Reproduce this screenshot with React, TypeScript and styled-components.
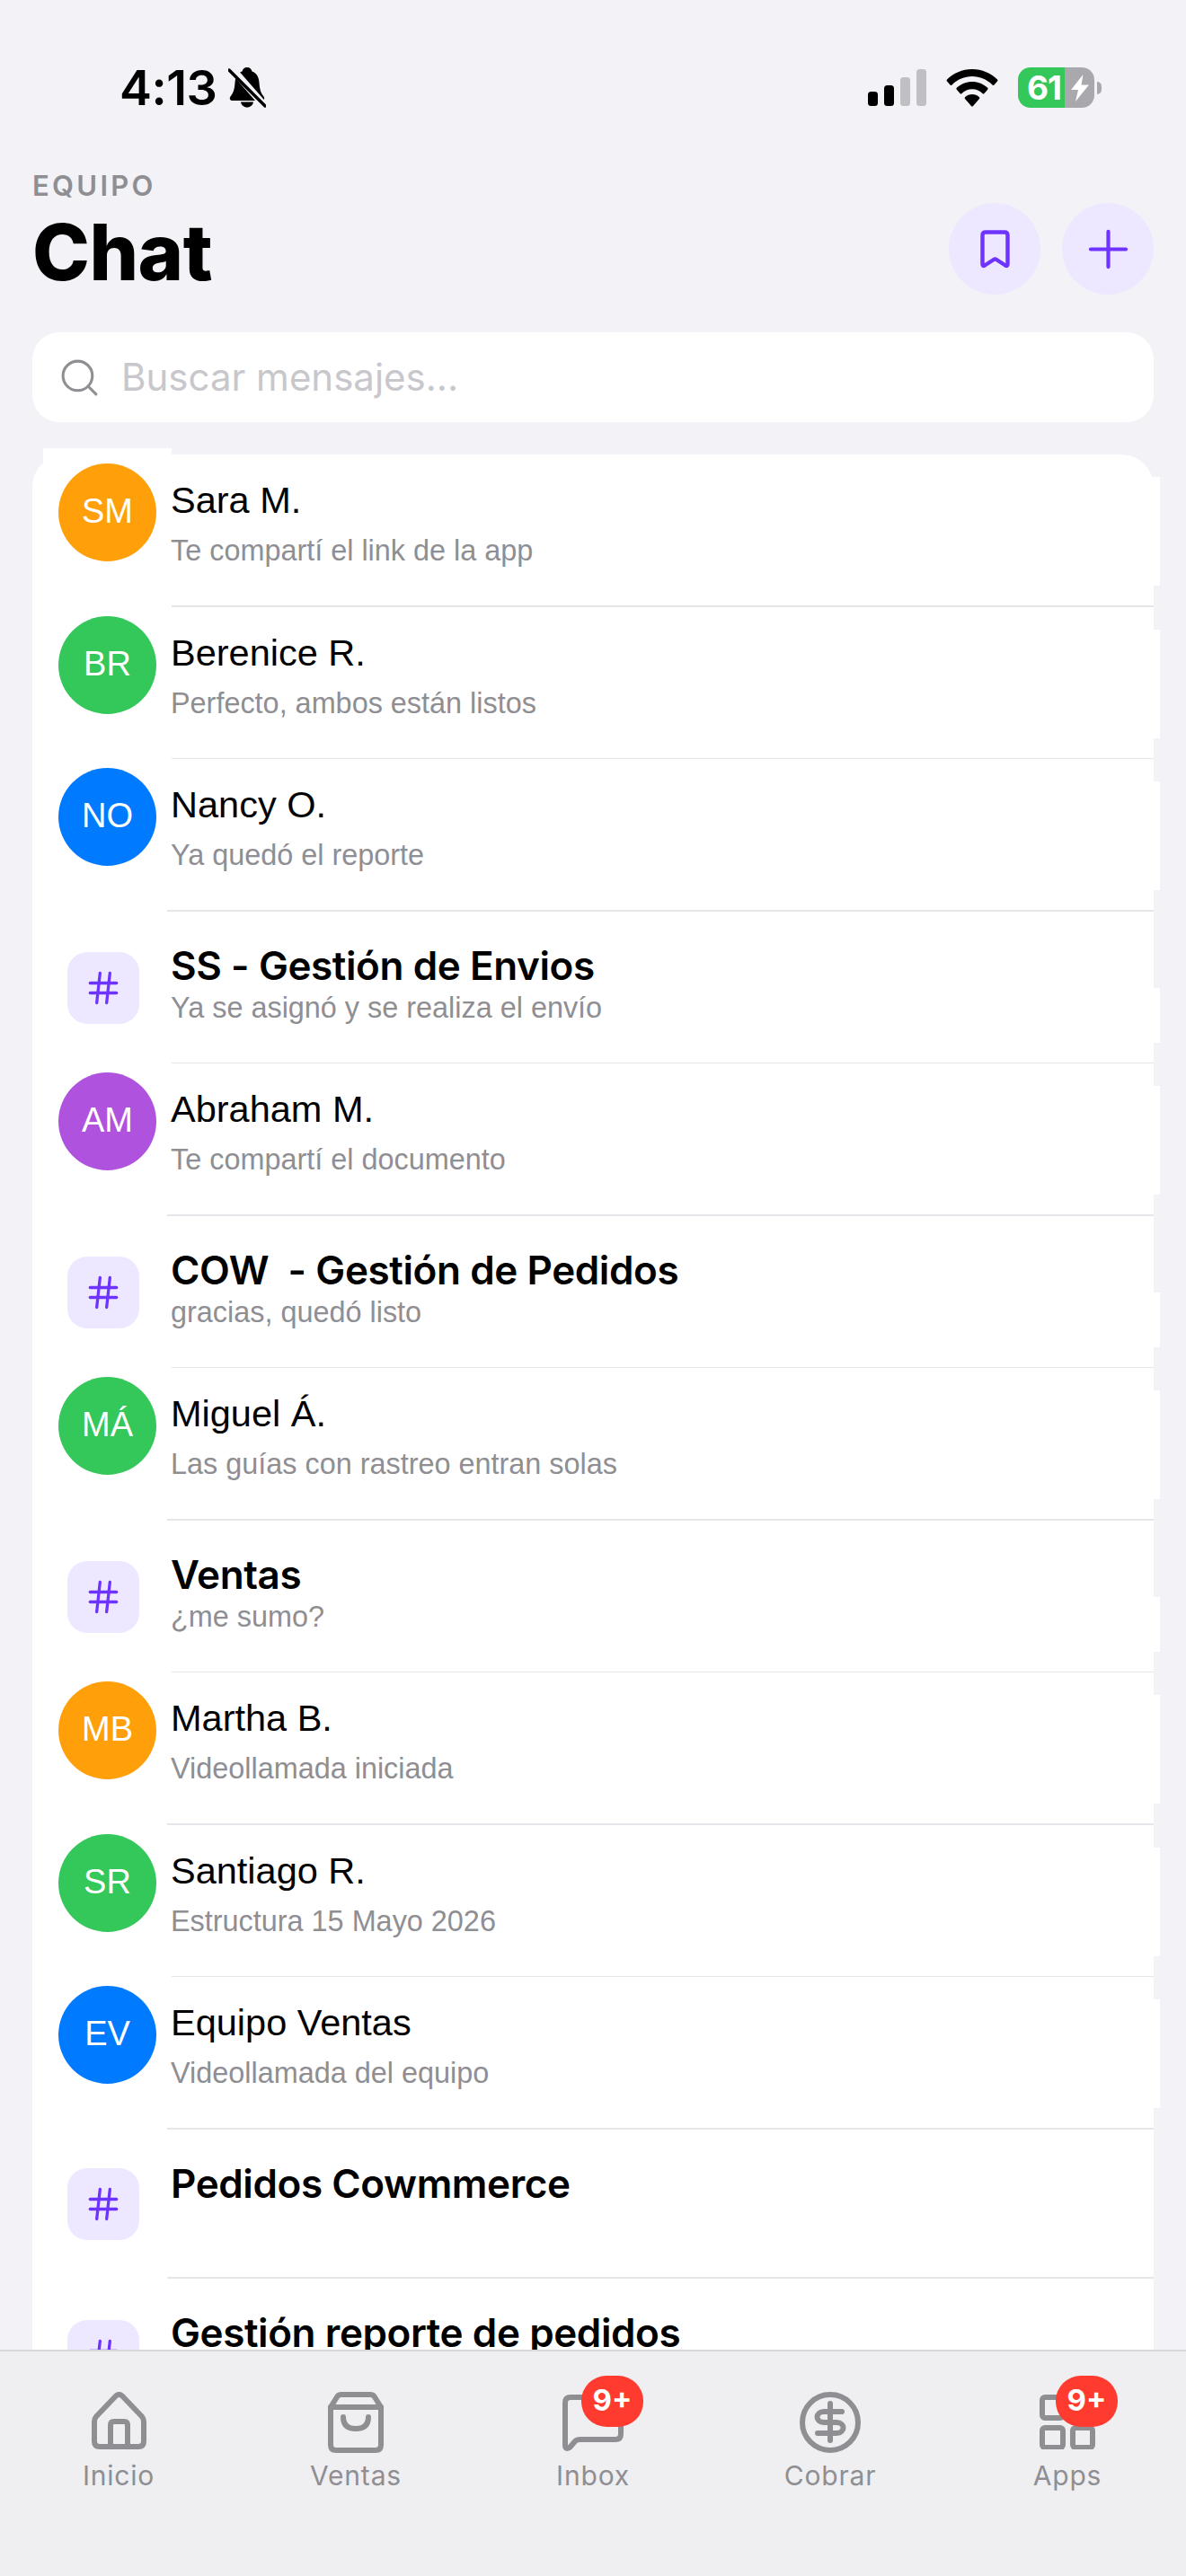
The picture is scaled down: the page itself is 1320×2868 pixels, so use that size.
import React from "react";
import styled, { createGlobalStyle } from "styled-components";
import { Hash, Plus, Search } from "lucide-react";

const GlobalStyle = createGlobalStyle`
  html, body { margin: 0; padding: 0; background: #f2f2f7; }
  * { box-sizing: border-box; }
`;

const SANS = `"Liberation Sans", Arial, sans-serif`;
const INTER = `Inter, "Noto Sans", sans-serif`;
const PURPLE = "#6e33ff";
const GREY = "#8e8e93";

const Screen = styled.div`
  width: 1320px;
  height: 2868px;
  background: #f2f2f7;
  display: flex;
  flex-direction: column;
  overflow: hidden;
  font-family: ${INTER};
`;

const StatusBar = styled.div`
  height: 125px;
  margin-bottom: 63px;
  padding: 70px 94px 0 133px;
  display: flex;
  align-items: center;
  justify-content: space-between;
  flex: none;
`;

const StatusLeft = styled.div`
  display: flex;
  align-items: center;
  gap: 13px;
`;

const Time = styled.span`
  font: 600 54px/55px ${INTER};
  letter-spacing: -0.5px;
  color: #000;
`;

const StatusRight = styled.div`
  display: flex;
  align-items: center;
  gap: 22px;
`;

const Battery = styled.div`
  display: flex;
  align-items: center;
  gap: 3px;
`;

const BatteryBody = styled.div`
  width: 85px;
  height: 45px;
  border-radius: 14px;
  overflow: hidden;
  display: flex;
`;

const BatteryFill = styled.div`
  width: 52px;
  background: #34c759;
  color: #fff;
  font: 700 37px/45px ${INTER};
  letter-spacing: -1px;
  padding-left: 10px;
  overflow: hidden;
  white-space: nowrap;
`;

const BatteryRest = styled.div`
  flex: 1;
  background: #a9a9ad;
  display: flex;
  align-items: center;
  justify-content: center;
`;

const BatteryNub = styled.div`
  width: 5px;
  height: 14px;
  background: #a9a9ad;
  border-radius: 0 7px 7px 0;
`;

const Header = styled.header`
  height: 182px;
  padding: 0 36px;
  display: flex;
  align-items: flex-start;
  justify-content: space-between;
  flex: none;
`;

const Eyebrow = styled.div`
  font: 600 31px/37px ${INTER};
  letter-spacing: 3.3px;
  color: ${GREY};
  margin-left: 0;
`;

const Title = styled.h1`
  margin: 13px 0 0;
  font: 800 86px/86px ${INTER};
  letter-spacing: -0.5px;
  color: #000;
`;

const Actions = styled.div`
  margin-top: 38px;
  display: flex;
  gap: 24px;
`;

const RoundButton = styled.button`
  width: 102px;
  height: 102px;
  border: 0;
  padding: 0;
  border-radius: 50%;
  background: #ede8ff;
  color: ${PURPLE};
  display: flex;
  align-items: center;
  justify-content: center;
`;

const SearchBar = styled.div`
  height: 100px;
  margin: 0 36px;
  padding-left: 28px;
  border-radius: 30px;
  background: #fff;
  display: flex;
  align-items: center;
  gap: 22px;
  flex: none;
  color: ${GREY};
`;

const Placeholder = styled.span`
  font: 400 42px/54px ${INTER};
  color: #c7c7cc;
`;

const Main = styled.main`
  flex: 1;
  min-height: 0;
  overflow: hidden;
  padding: 36px 36px 0;
`;

const List = styled.div`
  position: relative;
  background: #fff;
  border-radius: 36px 36px 0 0;
`;

const TopTab = styled.div`
  position: absolute;
  left: 12px;
  top: -7px;
  width: 143px;
  height: 30px;
  background: #fff;
`;

const Row = styled.div<{ $h: number }>`
  position: relative;
  height: ${(p) => p.$h}px;
  display: flex;
  flex-direction: column;
`;

const EdgeTab = styled.div<{ $channel: boolean }>`
  position: absolute;
  right: -7px;
  top: ${(p) => (p.$channel ? 85 : 25)}px;
  width: 20px;
  height: ${(p) => (p.$channel ? 61 : 121)}px;
  background: #fff;
`;

const RowBody = styled.div`
  flex: 1;
  min-height: 0;
  position: relative;
  display: flex;
  align-items: flex-start;
`;

const Divider = styled.div<{ $inset: number }>`
  flex: none;
  height: 1.5px;
  margin-left: ${(p) => p.$inset}px;
  background: #e5e5ea;
  position: relative;
`;

const Avatar = styled.div<{ $color: string }>`
  flex: none;
  width: 109px;
  height: 109px;
  margin: 10px 16px 0 29px;
  border-radius: 50%;
  background: ${(p) => p.$color};
  color: #fff;
  font: 400 38px/106px ${SANS};
  text-align: center;
`;

const Tile = styled.div<{ $top: number }>`
  flex: none;
  width: 80px;
  height: 80px;
  margin: ${(p) => p.$top}px 35px 0 39px;
  border-radius: 22px;
  background: #ede8ff;
  color: ${PURPLE};
  display: flex;
  align-items: center;
  justify-content: center;
`;

const PersonText = styled.div`
  padding-top: 26px;
`;

const PersonName = styled.div`
  font: 400 41.5px/50px ${SANS};
  color: #000;
  margin-bottom: 11px;
`;

const ChannelText = styled.div`
  padding-top: 34px;
`;

const ChannelName = styled.div`
  font: 600 44px/52px ${INTER};
  letter-spacing: -0.4px;
  color: #000;
  white-space: pre;
  margin-bottom: 1px;
`;

const Preview = styled.div`
  font: 400 32.4px/40px ${SANS};
  color: ${GREY};
`;

const TabBar = styled.nav`
  height: 252px;
  flex: none;
  background: #efeff2;
  border-top: 2px solid #d8d8dc;
  padding-top: 45px;
  display: grid;
  grid-template-columns: repeat(5, 264px);
`;

const TabItem = styled.div`
  display: flex;
  flex-direction: column;
  align-items: center;
`;

const TabIcon = styled.div`
  position: relative;
  width: 82px;
  height: 68px;
  display: flex;
  justify-content: center;
  align-items: flex-start;
  color: ${GREY};
`;

const TabLabel = styled.span`
  margin-top: 7px;
  font: 400 30px/36px ${INTER};
  letter-spacing: 0.8px;
  color: ${GREY};
`;

const Badge = styled.span`
  position: absolute;
  left: 28px;
  top: -18px;
  width: 69px;
  height: 57px;
  border-radius: 28px;
  background: #ff3b30;
  color: #fff;
  font: 700 33px/55px ${INTER};
  text-align: center;
`;

const BellSlash = () => (
  <svg width="42" height="45" viewBox="0 0 42 45">
    <path
      d="M21 0C24 0 26 2 26.5 4.5C32 6.5 34 11 34.5 17C35 24 36 28 39.5 32.5C41 34.5 40 37 37.5 37H4.5C2 37 1 34.5 2.5 32.5C6 28 7 24 7.5 17C8 11 10 6.5 15.5 4.5C16 2 18 0 21 0Z"
      fill="#000"
    />
    <path d="M14 38.5H28C27.5 42 24.5 44.5 21 44.5C17.5 44.5 14.5 42 14 38.5Z" fill="#000" />
    <path d="M3 0L44 47" stroke="#f2f2f7" strokeWidth="8" />
    <path d="M1 3L41 43" stroke="#000" strokeWidth="3.4" strokeLinecap="round" />
  </svg>
);

const Signal = () => (
  <svg width="65" height="41" viewBox="0 0 65 41">
    <rect x="0" y="25" width="11" height="16" rx="3.5" fill="#000" />
    <rect x="18" y="18" width="11" height="23" rx="3.5" fill="#000" />
    <rect x="36" y="9" width="11" height="32" rx="3.5" fill="#c0c0c4" />
    <rect x="54" y="0" width="11" height="41" rx="3.5" fill="#c0c0c4" />
  </svg>
);

const Wifi = () => (
  <svg width="58" height="42" viewBox="0 0 58 42" fill="#000">
    <path d="M29 0C18 0 8 4.5 1 11.5Q0 12.5 1 13.5L4.5 17.5Q5.5 18.5 6.5 17.5C12.5 11.5 20.5 8 29 8C37.5 8 45.5 11.5 51.5 17.5Q52.5 18.5 53.5 17.5L57 13.5Q58 12.5 57 11.5C50 4.5 40 0 29 0Z" />
    <path d="M29 14C22.5 14 16.5 16.5 11.8 20.8Q10.8 21.8 11.8 22.8L15.5 27Q16.5 28 17.5 27C20.5 24 24.5 22.3 29 22.3C33.5 22.3 37.5 24 40.5 27Q41.5 28 42.5 27L46.2 22.8Q47.2 21.8 46.2 20.8C41.5 16.5 35.5 14 29 14Z" />
    <path d="M29 28C26 28 23.2 29 21.2 31Q20.2 32 21 33L28 41Q29 42 30 41L37 33Q37.8 32 36.8 31C34.8 29 32 28 29 28Z" />
  </svg>
);

const Bolt = () => (
  <svg width="20" height="30" viewBox="0 0 20 30" fill="#fff">
    <path d="M13.5 0L0 17H8L5 30L20 11.5H11.5Z" />
  </svg>
);

const BookmarkIcon = () => (
  <svg width="33" height="43" viewBox="0 0 33 43" fill="none" stroke="currentColor" strokeWidth="4.4" strokeLinejoin="round">
    <path d="M2.5 6Q2.5 2.5 6 2.5H27Q30.5 2.5 30.5 6V38Q30.5 41 28 39.5L18 33Q16.5 32 15 33L5 39.5Q2.5 41 2.5 38Z" />
  </svg>
);

const iconProps = {
  fill: "none",
  stroke: "currentColor",
  strokeWidth: 6,
  strokeLinecap: "round" as const,
  strokeLinejoin: "round" as const,
};

const HomeIcon = () => (
  <svg width="61" height="64" viewBox="0 0 61 64" {...iconProps}>
    <path d="M27 4.5L5 27.5Q3 30 3 33V55Q3 61 9 61H52Q58 61 58 55V33Q58 30 56 27.5L34 4.5Q30.5 1.5 27 4.5Z" />
    <path d="M21 61V37Q21 33 25 33H36Q40 33 40 37V61" />
  </svg>
);

const BagIcon = () => (
  <svg width="62" height="68" viewBox="0 0 62 68" {...iconProps}>
    <path d="M3 17L10.5 5Q12 3 15 3H47Q50 3 51.5 5L59 17V59Q59 65 53 65H9Q3 65 3 59Z" />
    <path d="M3 17H59" />
    <path d="M17 28Q17 41 31 41Q45 41 45 28" />
  </svg>
);

const ChatIcon = () => (
  <svg width="68" height="67" viewBox="0 -3 68 67" {...iconProps}>
    <path d="M3 9Q3 3 9 3H59Q65 3 65 9V44Q65 50 59 50H20Q16 50 14 52L8 59Q3 62 3 56Z" />
  </svg>
);

const DollarIcon = () => (
  <svg width="68" height="68" viewBox="0 0 68 68" {...iconProps}>
    <circle cx="34" cy="34" r="31" />
    <path d="M34 13V54" />
    <path d="M47 22H27C17 22 17 34 27 34H41C51 34 51 46 41 46H20" />
  </svg>
);

const AppsIcon = () => (
  <svg width="62" height="64" viewBox="0 -3 62 64" {...iconProps}>
    <rect x="3" y="3" width="23" height="23" rx="3" />
    <rect x="37" y="3" width="22" height="23" rx="3" />
    <rect x="3" y="37" width="23" height="22" rx="3" />
    <rect x="37" y="37" width="22" height="22" rx="3" />
  </svg>
);

type Item = { inset: number } & (
  | { kind: "person"; initials: string; color: string; name: string; preview: string }
  | { kind: "channel"; name: string; preview?: string; top?: number; h?: number }
);

const ORANGE = "#ff9f0a";
const GREEN = "#34c759";
const BLUE = "#007aff";
const VIOLET = "#af52de";

const items: Item[] = [
  { kind: "person", inset: 155, initials: "SM", color: ORANGE, name: "Sara M.", preview: "Te compartí el link de la app" },
  { kind: "person", inset: 155, initials: "BR", color: GREEN, name: "Berenice R.", preview: "Perfecto, ambos están listos" },
  { kind: "person", inset: 150, initials: "NO", color: BLUE, name: "Nancy O.", preview: "Ya quedó el reporte" },
  { kind: "channel", inset: 155, name: "SS - Gestión de Envios", preview: "Ya se asignó y se realiza el envío" },
  { kind: "person", inset: 150, initials: "AM", color: VIOLET, name: "Abraham M.", preview: "Te compartí el documento" },
  { kind: "channel", inset: 155, name: "COW  - Gestión de Pedidos", preview: "gracias, quedó listo" },
  { kind: "person", inset: 150, initials: "MÁ", color: GREEN, name: "Miguel Á.", preview: "Las guías con rastreo entran solas" },
  { kind: "channel", inset: 155, name: "Ventas", preview: "¿me sumo?" },
  { kind: "person", inset: 150, initials: "MB", color: ORANGE, name: "Martha B.", preview: "Videollamada iniciada" },
  { kind: "person", inset: 155, initials: "SR", color: GREEN, name: "Santiago R.", preview: "Estructura 15 Mayo 2026" },
  { kind: "person", inset: 150, initials: "EV", color: BLUE, name: "Equipo Ventas", preview: "Videollamada del equipo" },
  { kind: "channel", inset: 150, name: "Pedidos Cowmmerce", top: 43, h: 166 },
  { kind: "channel", inset: 150, name: "Gestión reporte de pedidos", top: 46 },
];

const tabs = [
  { label: "Inicio", icon: <HomeIcon /> },
  { label: "Ventas", icon: <BagIcon /> },
  { label: "Inbox", icon: <ChatIcon />, badge: true },
  { label: "Cobrar", icon: <DollarIcon /> },
  { label: "Apps", icon: <AppsIcon />, badge: true },
];

export default function App() {
  return (
    <Screen>
      <GlobalStyle />
      <StatusBar>
        <StatusLeft>
          <Time>4:13</Time>
          <BellSlash />
        </StatusLeft>
        <StatusRight>
          <Signal />
          <Wifi />
          <Battery>
            <BatteryBody>
              <BatteryFill>61</BatteryFill>
              <BatteryRest>
                <Bolt />
              </BatteryRest>
            </BatteryBody>
            <BatteryNub />
          </Battery>
        </StatusRight>
      </StatusBar>

      <Header>
        <div>
          <Eyebrow>EQUIPO</Eyebrow>
          <Title>Chat</Title>
        </div>
        <Actions>
          <RoundButton aria-label="Guardados">
            <BookmarkIcon />
          </RoundButton>
          <RoundButton aria-label="Nuevo">
            <Plus size={67} strokeWidth={1.5} />
          </RoundButton>
        </Actions>
      </Header>

      <SearchBar>
        <Search size={49} strokeWidth={1.5} />
        <Placeholder>Buscar mensajes...</Placeholder>
      </SearchBar>

      <Main>
        <List>
          <TopTab />
          {items.map((item, i) => (
            <Row key={i} $h={item.kind === "channel" && item.h ? item.h : 169.5}>
              {item.preview && <EdgeTab $channel={item.kind === "channel"} />}
              <RowBody>
                {item.kind === "person" ? (
                  <>
                    <Avatar $color={item.color}>{item.initials}</Avatar>
                    <PersonText>
                      <PersonName>{item.name}</PersonName>
                      <Preview>{item.preview}</Preview>
                    </PersonText>
                  </>
                ) : (
                  <>
                    <Tile $top={item.top ?? 45}>
                      <Hash size={44} strokeWidth={1.8} />
                    </Tile>
                    <ChannelText>
                      <ChannelName>{item.name}</ChannelName>
                      {item.preview && <Preview>{item.preview}</Preview>}
                    </ChannelText>
                  </>
                )}
              </RowBody>
              <Divider $inset={item.inset} />
            </Row>
          ))}
        </List>
      </Main>

      <TabBar>
        {tabs.map((tab) => (
          <TabItem key={tab.label}>
            <TabIcon>
              {tab.icon}
              {tab.badge && <Badge>9+</Badge>}
            </TabIcon>
            <TabLabel>{tab.label}</TabLabel>
          </TabItem>
        ))}
      </TabBar>
    </Screen>
  );
}
